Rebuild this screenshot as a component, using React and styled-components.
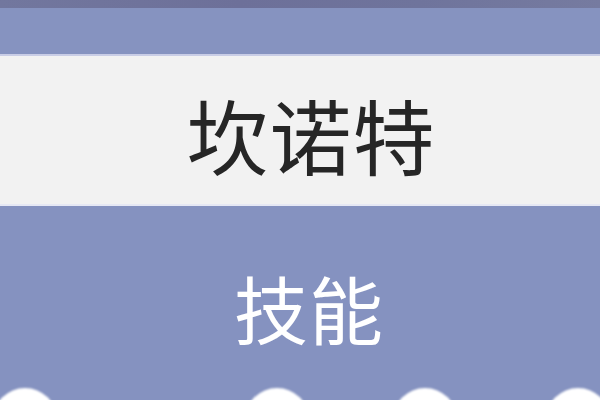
import React from "react";
import styled, { createGlobalStyle } from "styled-components";

const Global = createGlobalStyle`
  html, body { margin: 0; padding: 0; }
  body { width: 600px; height: 400px; overflow: hidden; background: #8592c0; }
  #root { width: 600px; height: 400px; }
`;

const Screen = styled.div`
  width: 600px;
  height: 400px;
  display: flex;
  flex-direction: column;
  background: #8592c0;
  font-family: "Noto Sans CJK SC", "Noto Sans", sans-serif;
  overflow: hidden;
`;

const TopStrip = styled.div`
  height: 8px;
  flex: none;
  background: linear-gradient(90deg, #72779e 0%, #6d7099 40%, #6f749c 70%, #767ba0 100%);
`;

const Header = styled.div`
  height: 46px;
  flex: none;
  background: #8693c0;
  border-bottom: 2px solid #c9cde6;
`;

const NameBand = styled.div`
  height: 148px;
  flex: none;
  background: #f2f2f2;
  display: flex;
  align-items: center;
  justify-content: center;
  border-bottom: 2px solid #e6e8f4;
`;

const Name = styled.div`
  font-size: 82px;
  line-height: 1;
  color: #262626;
  letter-spacing: 1px;
  padding-left: 22px;
  margin-top: 8px;
`;

const Section = styled.div`
  flex: 1;
  display: flex;
  flex-direction: column;
  align-items: center;
`;

const SectionTitle = styled.div`
  margin-top: 64px;
  font-size: 74px;
  line-height: 1;
  color: #ffffff;
  padding-left: 18px;
  letter-spacing: 1px;
`;

const Dots = styled.div`
  position: relative;
  width: 600px;
  flex: 1;
`;

const Dot = styled.div`
  position: absolute;
  top: 44px;
  width: 64px;
  height: 64px;
  border-radius: 50%;
  background: #ffffff;
  filter: blur(1px);
`;

const dots = [-7, 245, 393, 546];

export default function App() {
  return (
    <>
      <Global />
      <Screen>
        <TopStrip />
        <Header />
        <NameBand>
          <Name>坎诺特</Name>
        </NameBand>
        <Section>
          <SectionTitle>技能</SectionTitle>
          <Dots>
            {dots.map((x) => (
              <Dot key={x} style={{ left: x }} />
            ))}
          </Dots>
        </Section>
      </Screen>
    </>
  );
}
